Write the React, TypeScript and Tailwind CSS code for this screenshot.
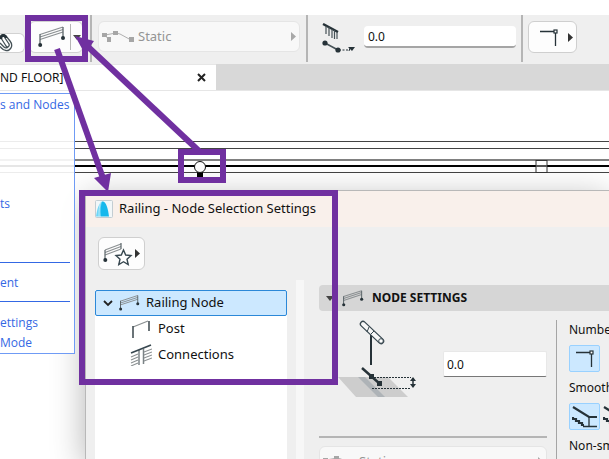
import { ReactNode } from "react";
import clsx from "clsx";

interface IconProps {
  className?: string;
}

function RailingIcon({ className }: IconProps) {
  return (
    <svg viewBox="0 0 28 22" fill="none" className={clsx("shrink-0", className)}>
      <g stroke="#8b9092" strokeWidth="1.3">
        <path d="M2 8.5 25 1" />
        <path d="M2 11 25 3.5" />
        <path d="M2 13.500 25 6" />
      </g>
      <path d="M2 8v11M25 1v11" stroke="#5d676b" strokeWidth="1.3" />
      <circle cx="2.200" cy="19" r="2" fill="#263238" />
      <circle cx="25" cy="12" r="2" fill="#263238" />
    </svg>
  );
}

function PathNodesIcon() {
  return (
    <svg viewBox="0 0 32 12" fill="none" className="h-3 w-8 shrink-0">
      <path d="M3 4 14 2l4 1 11 6M3 4l4 5" stroke="#b0b0b0" />
      <path d="M0 2h5v4H0zM11 0h5v4h-5zM5 6h4v5H5zM27 6h5v5h-5z" fill="#a6a6a6" />
    </svg>
  );
}

function SlopeIcon() {
  return (
    <svg viewBox="0 0 34 30" fill="none" className="h-[30px] w-[34px] shrink-0">
      <path d="M1 1 16 9" stroke="#263238" strokeWidth="2.400" />
      <path d="M4 3v8M7 4v9M10 6v9M12.500 7v9M15 9v7" stroke="#465257" strokeWidth="1.200" />
      <path d="m3 20 13 7" stroke="#465257" strokeWidth="1.500" />
      <path d="M17 27h10" stroke="#263238" strokeWidth="1.200" strokeDasharray="2 1.500" />
      <path d="m27 28 1-3" stroke="#263238" />
      <circle cx="3" cy="20" r="2.600" fill="#263238" />
      <circle cx="16" cy="27" r="2.600" fill="#263238" />
      <path d="M26 24h7l-3 4z" fill="#263238" />
    </svg>
  );
}

function CornerIcon({ className }: IconProps) {
  return (
    <svg viewBox="0 0 18 17" fill="none" className={clsx("h-[17px] w-[18px] shrink-0", className)}>
      <path d="M0 2.500h14M15.500 4v13" stroke="#263238" strokeWidth="1.300" />
      <rect x="14" y="1" width="3" height="3" fill="#fff" stroke="#263238" strokeWidth="1.200" />
    </svg>
  );
}

function ClipIcon() {
  return (
    <svg viewBox="0 0 14 18" fill="none" className="h-[18px] w-[14px] shrink-0">
      <path
        d="M6 2l4 5c4 5 0 10-4 9.500-3 0-4-2-6-4M1 4l5 8c1.500 2 4 0 3-2L5 4M0 9l4 4c2 2 6 0 5-3"
        stroke="#465257"
        strokeWidth="1.300"
      />
      <path d="M1 5C0 1 5 0 6 4" stroke="#263238" strokeWidth="3" />
    </svg>
  );
}

function PostIcon() {
  return (
    <svg viewBox="0 0 20 18" fill="none" className="h-[18px] w-5 shrink-0">
      <path d="M2 7 17 1" stroke="#8b9092" strokeWidth="1.300" />
      <path d="M2 6v12M18 1v10" stroke="#465257" strokeWidth="1.600" />
    </svg>
  );
}

function ConnectionsIcon() {
  return (
    <svg viewBox="0 0 22 22" fill="none" className="h-[22px] w-[22px] shrink-0">
      <path
        d="M1 13l7-3M1 16l7-3M1 19l7-3M1 22l7-3M14 8l8-3M14 11l8-3M14 14l8-3M14 17l8-3"
        stroke="#8b9092"
        strokeWidth="1.100"
      />
      <path d="M9 6v15M13.500 5v15" stroke="#7b8386" strokeWidth="1.500" />
      <path d="M1 9 21 1" stroke="#37474f" strokeWidth="1.700" />
    </svg>
  );
}

function StairIcon() {
  return (
    <svg viewBox="0 0 26 22" fill="none" className="h-[22px] w-[26px] shrink-0">
      <path d="m1 1 16 10h8" stroke="#263238" strokeWidth="2.200" />
      <path d="M17 11v9M11 20.500h14" stroke="#263238" strokeWidth="1.300" />
      <path d="M1 11v2h3v2h3v2h3v2h2" stroke="#263238" strokeWidth="2.200" />
    </svg>
  );
}

function AppLogo() {
  return (
    <svg viewBox="0 0 18 18" className="h-[18px] w-[18px] shrink-0">
      <rect x=".5" y=".5" width="17" height="17" rx="1" fill="#f2f7f9" stroke="#c3cdd2" />
      <path d="M1 16.500C2 9 4 3 7 1.500c1 4-1 9-1 15z" fill="#6fd6f7" />
      <path d="M6 16.500C5 10 6 5 7 1.500c4-1 6 7 7 15z" fill="#17b8ec" />
      <path d="M6 1.500c-2 4-2 10-2 15" stroke="#c5effb" strokeWidth=".8" fill="none" />
    </svg>
  );
}

function FavoriteRailingIcon() {
  return (
    <svg viewBox="0 0 30 24" fill="none" className="h-6 w-[30px] shrink-0">
      <path d="M2 8 18 2M2 10.500 18 4.500M2 13l16-6" stroke="#8b9092" strokeWidth="1.200" />
      <path d="M2 8v10M18 1v6" stroke="#5d676b" strokeWidth="1.200" />
      <circle cx="2.300" cy="18" r="2" fill="#263238" />
      <path
        d="m20.500 8 2.200 5 5.300.6-4 3.600 1.200 5.300-4.700-2.800-4.700 2.800 1.200-5.300-4-3.600 5.300-.6z"
        fill="#fff"
        stroke="#37474f"
        strokeWidth="1.400"
      />
    </svg>
  );
}

function ElevationPreview() {
  return (
    <svg viewBox="0 0 84 80" fill="none" className="h-20 w-[84px] shrink-0">
      <path d="M0 57h50l20 20H18z" fill="#cdcdcd" />
      <path d="M20 57h7l20 20h-7z" fill="#aeb3b7" />
      <path d="M33 14v31" stroke="#263238" strokeWidth="2" />
      <path d="m25 4 18 17" stroke="#37474f" strokeWidth="6.500" strokeLinecap="round" />
      <path d="m25 4 18 17" stroke="#f7f7f7" strokeWidth="4" strokeLinecap="round" />
      <path d="m29 12 2-5M33 14l3-3" stroke="#37474f" />
      <circle cx="43" cy="21" r="2.300" fill="#fff" stroke="#37474f" />
      <path d="m24 48 18 16" stroke="#263238" strokeWidth="2.400" />
      <path d="M31 54h5v5h-5zM39 61h5v5h-5z" fill="#263238" />
      <path d="M36 57.500h37M34 68.500h39" stroke="#263238" strokeDasharray="2 1" />
      <path d="M75 58v9" stroke="#263238" strokeWidth="1.500" />
      <path d="m72 61 3-4 3 4zM72 64l3 4 3-4z" fill="#263238" />
    </svg>
  );
}

function ArrowRight({ className }: IconProps) {
  return (
    <svg viewBox="0 0 5 9" className={clsx("h-[9px] w-[5px] shrink-0", className)}>
      <path d="M0 0v9l5-4.500z" fill="currentColor" />
    </svg>
  );
}

function ArrowDown() {
  return (
    <svg viewBox="0 0 8 5" className="h-[5px] w-2 shrink-0">
      <path d="M0 0h8L4 5z" fill="#444" />
    </svg>
  );
}

function Divider() {
  return <div className="h-full w-0.5 shrink-0 bg-[#b5b5b5]" />;
}

function StaticButton({ className }: { className?: string }) {
  return (
    <button
      type="button"
      disabled
      className={clsx(
        "flex h-[31px] items-center gap-1 rounded-md border border-[#e5e5e5] bg-[#f8f8f8] px-[3px] text-[13px] text-[#949494]",
        className,
      )}
    >
      <PathNodesIcon />
      <span>Static</span>
      <ArrowRight className="ml-auto text-[#a8a8a8]" />
    </button>
  );
}

function Toolbar() {
  return (
    <div className="flex h-[49px] shrink-0 overflow-hidden bg-[#efefef] pb-0.5">
      <button
        type="button"
        aria-label="Magnet"
        className="mt-[18px] flex h-5 w-[25px] shrink-0 items-center rounded-r-md border border-l-0 border-[#d2d2d2] bg-white"
      >
        <ClipIcon />
      </button>
      <button
        type="button"
        aria-label="Railing settings"
        className="mt-1.5 ml-1 flex h-8 w-[54px] shrink-0 items-center rounded-md border border-[#d2d2d2] bg-[#fdfdfd] pl-2"
      >
        <RailingIcon className="h-[22px] w-7" />
        <span className="ml-1 h-[26px] w-px bg-[#b5b5b5]" />
        <span className="ml-0.5">
          <ArrowDown />
        </span>
      </button>
      <div className="ml-[7px] flex">
        <Divider />
      </div>
      <StaticButton className="mt-1.5 ml-1.5 w-[202px] shrink-0" />
      <div className="ml-1.5 flex">
        <Divider />
      </div>
      <div className="mt-2 ml-3.5">
        <SlopeIcon />
      </div>
      <input
        type="text"
        aria-label="Node elevation"
        defaultValue="0.0"
        className="mt-[11px] ml-2 h-[22px] w-[152px] shrink-0 rounded-sm border-b-2 border-[#a5a5a5] bg-white px-1 outline-none"
      />
      <div className="ml-[5px] flex">
        <Divider />
      </div>
      <button
        type="button"
        aria-label="Corner type"
        className="mt-1.5 ml-[5px] flex h-8 w-[49px] shrink-0 items-center gap-2.5 rounded-md border border-[#cfcfcf] bg-[#fdfdfd] pl-[11px]"
      >
        <CornerIcon />
        <ArrowRight className="text-[#333]" />
      </button>
    </div>
  );
}

function TabBar() {
  return (
    <div className="flex h-[27px] shrink-0 border-b border-[#e6e6e6] bg-[#d8d8d8]">
      <div className="flex w-[216px] items-center justify-between border-t border-[#e6e6e6] bg-white pr-2.5">
        <span className="whitespace-nowrap">ND FLOOR]</span>
        <button type="button" aria-label="Close tab">
          <svg viewBox="0 0 9 9" className="h-[9px] w-[9px]">
            <path d="m1 1 7 7M8 1 1 8" stroke="#222" strokeWidth="2" />
          </svg>
        </button>
      </div>
    </div>
  );
}

function FloorPlan() {
  return (
    <svg width="100%" height="100" className="block">
      <rect y="50" width="100%" height="1" fill="#444" />
      <rect y="57" width="100%" height="1" fill="#444" />
      <rect y="68" width="100%" height="2" fill="#808080" />
      <rect y="74" width="100%" height="2" fill="#000" />
      <rect y="81" width="100%" height="1" fill="#444" />
      <rect x="536" y="69.500" width="11" height="12" fill="#fff" stroke="#333" />
      <path d="M536 75h11" stroke="#555" strokeWidth="2" />
      <path d="M197 81h6v6h-6z" fill="#000" />
      <circle cx="200" cy="76" r="5.500" fill="#fff" stroke="#111" />
    </svg>
  );
}

function InfoTag() {
  return (
    <div className="absolute top-0.5 left-0 h-[261px] w-[75px] overflow-hidden border border-l-0 border-[#6f9bf5] bg-white/90 font-['Open_Sans','Noto_Sans',sans-serif] leading-5 text-[#3468e4]">
      <div className="h-[168px] pt-px">
        <p className="whitespace-nowrap">s and Nodes</p>
        <p className="pt-[79px]">ts</p>
      </div>
      <div className="mr-1 flex h-10 items-center border-t border-b border-[#3468e4] pt-px">ent</div>
      <p className="pt-[11px]">ettings</p>
      <p>Mode</p>
    </div>
  );
}

interface TreeItemProps {
  icon: ReactNode;
  label: string;
}

function TreeItem({ icon, label }: TreeItemProps) {
  return (
    <li>
      <button type="button" className="flex h-[26px] w-full items-center gap-1.5 pl-[35px] text-left">
        <span className="flex w-[22px] justify-center">{icon}</span>
        {label}
      </button>
    </li>
  );
}

function SettingsTree() {
  return (
    <nav className="mt-2.5 w-48 shrink-0 bg-white text-[13px]">
      <button
        type="button"
        className="flex h-[26px] w-full items-center rounded-xs border border-[#2b88d8] bg-[#cce8ff] pl-[7px] text-left"
      >
        <svg viewBox="0 0 10 7" fill="none" className="h-[7px] w-2.5">
          <path d="m1 1 4 4 4-4" stroke="#222" strokeWidth="1.800" />
        </svg>
        <RailingIcon className="ml-1.5 h-[18px] w-[21px]" />
        <span className="ml-1.5">Railing Node</span>
      </button>
      <ul>
        <TreeItem icon={<PostIcon />} label="Post" />
        <TreeItem icon={<ConnectionsIcon />} label="Connections" />
      </ul>
    </nav>
  );
}

function OptionButton({ active, label, children }: { active?: boolean; label: string; children: ReactNode }) {
  return (
    <button
      type="button"
      aria-label={label}
      className={clsx(
        "flex h-[27px] w-[31px] shrink-0 items-center justify-center rounded-xs border",
        active ? "border-[#99d1ff] bg-[#cce8ff]" : "border-transparent",
      )}
    >
      {children}
    </button>
  );
}

function NodeSettings() {
  return (
    <section className="ml-[15px] flex min-w-0 flex-1 flex-col overflow-hidden pt-[5px]">
      <button
        type="button"
        className="flex h-[26px] shrink-0 items-center rounded-l-sm bg-[#d6d6d6] pl-[7px] text-left font-bold whitespace-nowrap"
      >
        <ArrowDown />
        <RailingIcon className="ml-2 h-[19px] w-[22px]" />
        <span className="ml-2">NODE SETTINGS</span>
      </button>
      <div className="flex flex-1 pt-[9px]">
        <div className="w-[228px] shrink-0">
          <div className="flex h-[116px] items-start justify-between pl-[19px]">
            <ElevationPreview />
            <input
              type="text"
              aria-label="Vertical offset"
              defaultValue="0.0"
              className="mt-[31px] h-[26px] w-[104px] rounded-xs border border-[#e8e8e8] border-b-[#777] bg-white px-[3px] outline-none"
            />
          </div>
          <div className="h-0.5 bg-[#b5b5b5]" />
          <StaticButton className="mt-2 w-full" />
        </div>
        <div className="ml-[9px] w-px shrink-0 bg-[#a5a5a5]" />
        <div className="ml-3 min-w-0 whitespace-nowrap">
          <h3 className="leading-5">Number</h3>
          <div className="mt-[5px] mb-1.5 flex gap-0.5">
            <OptionButton active label="One node">
              <CornerIcon />
            </OptionButton>
            <OptionButton label="Two nodes">
              <CornerIcon />
            </OptionButton>
          </div>
          <h3 className="leading-5">Smooth</h3>
          <div className="mt-[5px] mb-1.5 flex">
            <OptionButton active label="Smooth slope">
              <StairIcon />
            </OptionButton>
            <OptionButton label="Stepped slope">
              <StairIcon />
            </OptionButton>
          </div>
          <h3 className="leading-5">Non-smooth</h3>
        </div>
      </div>
    </section>
  );
}

function SettingsDialog() {
  return (
    <div
      role="dialog"
      aria-label="Railing - Node Selection Settings"
      className="absolute top-[99px] right-0 bottom-0 left-[85px] flex flex-col border-t border-l border-[#b8b8b8] bg-[#efefef] shadow-[0_8px_32px_rgba(0,0,0,0.3)]"
    >
      <div className="flex h-9 shrink-0 items-center gap-1.5 bg-[#f9f0eb] pl-[9px]">
        <AppLogo />
        <h2 className="text-[13px] whitespace-nowrap">Railing - Node Selection Settings</h2>
      </div>
      <div className="shrink-0 px-3 py-2.5">
        <button
          type="button"
          aria-label="Favorites"
          className="flex h-[33px] w-[47px] items-center gap-0.5 rounded-md border border-[#cfcfcf] bg-[#fdfdfd] pl-1"
        >
          <FavoriteRailingIcon />
          <ArrowRight className="text-[#333]" />
        </button>
      </div>
      <div className="flex min-h-0 flex-1 pl-[9px]">
        <SettingsTree />
        <div className="ml-[9px] w-2 shrink-0 bg-[#f7f7f7]" />
        <NodeSettings />
      </div>
    </div>
  );
}

function Callouts() {
  return (
    <svg width="345" height="390" fill="none" className="pointer-events-none absolute top-0 left-0">
      <g stroke="#7030a0" strokeWidth="6">
        <rect x="28" y="18" width="57" height="41" />
        <rect x="181" y="152" width="42" height="28" />
        <rect x="82" y="193" width="253" height="189" />
        <path d="m57 49 47 132" />
        <path d="M199 151 84 43" />
      </g>
      <path d="m108 192-14-14 17-5zM75 36l19 5-9 13z" fill="#7030a0" />
    </svg>
  );
}

export default function App() {
  return (
    <div className="relative flex h-screen flex-col overflow-hidden bg-white pt-[15px] font-['Noto_Sans','Open_Sans',sans-serif] text-xs text-[#111]">
      <Toolbar />
      <TabBar />
      <main className="relative min-h-0 flex-1 overflow-hidden">
        <FloorPlan />
        <SettingsDialog />
        <InfoTag />
      </main>
      <Callouts />
    </div>
  );
}
